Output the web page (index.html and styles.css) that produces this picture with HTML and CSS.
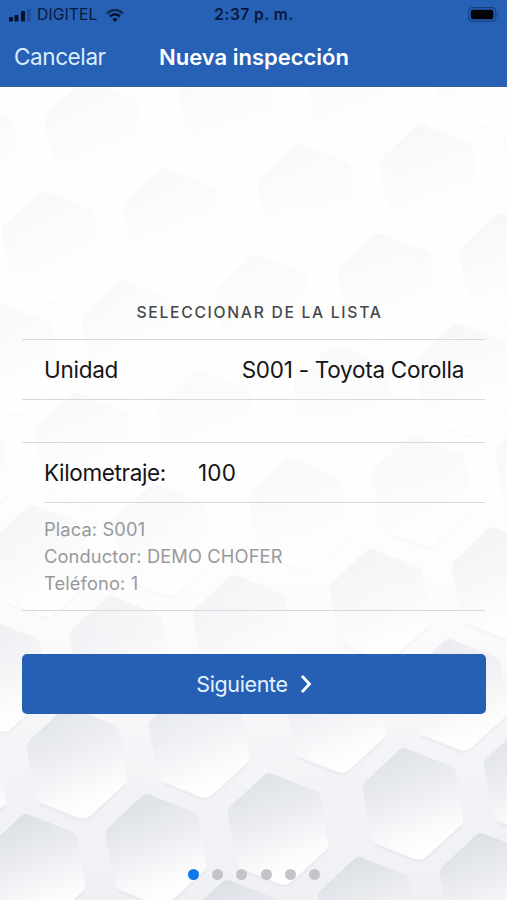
FILE: index.html
```
<!DOCTYPE html>
<html lang="es">
<head>
<meta charset="utf-8">
<title>Nueva inspección</title>
<link rel="stylesheet" href="styles.css">
</head>
<body>
<div class="screen">
  <svg class="backdrop" viewBox="0 0 507 900" aria-hidden="true">
    <defs>
      <linearGradient id="face" x1=".3" y1="0" x2=".65" y2="1">
        <stop offset="0" stop-color="#dbdee4"/>
        <stop offset=".4" stop-color="#eaecf0"/>
        <stop offset=".8" stop-color="#fcfcfd"/>
        <stop offset="1" stop-color="#fff"/>
      </linearGradient>
      <linearGradient id="ground" x1="0" y1="0" x2="0" y2="1">
        <stop offset=".3" stop-color="#fcfcfd"/>
        <stop offset=".65" stop-color="#f8f9fa"/>
        <stop offset=".85" stop-color="#f2f3f6"/>
        <stop offset="1" stop-color="#f0f1f5"/>
      </linearGradient>
      <linearGradient id="fade" x1="0" y1="0" x2="0" y2="1">
        <stop offset="0" stop-color="#fff" stop-opacity=".78"/>
        <stop offset=".5" stop-color="#fff" stop-opacity=".76"/>
        <stop offset=".66" stop-color="#fff" stop-opacity=".6"/>
        <stop offset=".78" stop-color="#fff" stop-opacity=".2"/>
        <stop offset=".9" stop-color="#fff" stop-opacity="0"/>
      </linearGradient>
      <radialGradient id="glow" cx=".42" cy=".4" r=".55">
        <stop offset="0" stop-color="#fff" stop-opacity=".4"/>
        <stop offset="1" stop-color="#fff" stop-opacity="0"/>
      </radialGradient>
      <filter id="soft" x="-10%" y="-10%" width="120%" height="120%"><feGaussianBlur stdDeviation=".8"/></filter>
      <g id="hex">
        <path d="M58 77 L23 109 Q17 114 10 112 L-28 97" fill="none" stroke="#dfe2e7" stroke-width="1.6" stroke-linejoin="round" filter="url(#soft)"/>
        <path d="M-5 2 Q0 -2 6 2 L47 18 Q51 20 52 25 L59 70 Q60 75 56 78 L22 109 Q17 113 11 111 L-27 96 Q-31 94 -32 90 L-41 42 Q-42 37 -38 33 Z" fill="url(#face)"/>
      </g>
    </defs>
    <rect width="507" height="900" fill="url(#ground)"/>
    <g transform="translate(-1 0)">
    <use href="#hex" x="-36" y="101"/><use href="#hex" x="87" y="80"/><use href="#hex" x="221" y="56"/><use href="#hex" x="348" y="35"/><use href="#hex" x="470" y="14"/>
    <use href="#hex" x="44" y="191"/><use href="#hex" x="166" y="168"/><use href="#hex" x="300" y="144"/><use href="#hex" x="422" y="124"/><use href="#hex" x="546" y="100"/>
    <use href="#hex" x="1" y="303"/><use href="#hex" x="123" y="280"/><use href="#hex" x="257" y="254"/><use href="#hex" x="380" y="233"/><use href="#hex" x="502" y="213"/>
    <use href="#hex" x="-48" y="417"/><use href="#hex" x="77" y="393"/><use href="#hex" x="200" y="370"/><use href="#hex" x="336" y="345"/><use href="#hex" x="458" y="323"/>
    <use href="#hex" x="33" y="505"/><use href="#hex" x="156" y="484"/><use href="#hex" x="291" y="458"/><use href="#hex" x="414" y="435"/><use href="#hex" x="537" y="413"/>
    <use href="#hex" x="-10" y="620"/><use href="#hex" x="112" y="596"/><use href="#hex" x="235" y="575"/><use href="#hex" x="372" y="549"/><use href="#hex" x="494" y="527"/>
    <use href="#hex" x="-52" y="728"/><use href="#hex" x="69" y="707"/><use href="#hex" x="191" y="686"/><use href="#hex" x="328" y="661"/><use href="#hex" x="450" y="639"/>
    <use href="#hex" x="27" y="814"/><use href="#hex" x="148" y="794"/><use href="#hex" x="270" y="773"/><use href="#hex" x="405" y="748"/><use href="#hex" x="526" y="725"/>
    <use href="#hex" x="228" y="880"/><use href="#hex" x="360" y="857"/><use href="#hex" x="482" y="833"/>
    </g>
    <rect width="507" height="900" fill="url(#fade)"/>
    <rect width="507" height="900" fill="url(#glow)"/>
  </svg>

  <header class="top">
    <div class="status">
      <div class="carrier">
        <svg class="signal" viewBox="0 0 22 13"><rect x="0" y="8" width="4" height="4.5" rx="1"/><rect x="5.5" y="6" width="4" height="6.5" rx="1"/><rect x="12" y="2" width="4" height="10.5" rx="1"/><rect x="18" y="0" width="4" height="13" rx="1" opacity=".2"/></svg>
        <span class="network">DIGITEL</span>
        <svg class="wifi" viewBox="0 0 18 13"><path d="M1 4.5 Q9 -2.5 17 4.5" opacity=".7"/><path d="M4 7.5 Q9 3 14 7.5"/><path class="dot" d="M6.2 10 Q9 7.8 11.8 10 L9 13Z"/></svg>
      </div>
      <span class="clock">2:37 p. m.</span>
      <svg class="battery" viewBox="0 0 33 16"><rect class="case" x=".6" y=".6" width="29" height="14.6" rx="4"/><rect x="3" y="3" width="24" height="10" rx="2"/><path d="M31 5.5 Q33.5 8 31 10.5Z" opacity=".35"/></svg>
    </div>
    <nav class="bar">
      <span class="cancel">Cancelar</span>
      <h1 class="title">Nueva inspección</h1>
    </nav>
  </header>

  <main class="content">
    <h2 class="caption">SELECCIONAR DE LA LISTA</h2>
    <section class="row">
      <span class="unit">Unidad</span>
      <span class="value">S001 - Toyota Corolla</span>
    </section>
    <section class="details">
      <div class="mileage"><span class="label">Kilometraje:</span><span class="km">100</span></div>
      <div class="info">
        <p class="plate">Placa: S001</p>
        <p class="driver">Conductor: DEMO CHOFER</p>
        <p class="phone">Teléfono: 1</p>
      </div>
    </section>
    <button class="next"><span>Siguiente</span><svg class="chevron" viewBox="0 0 12 20"><path d="M2 2 L9.5 10 L2 18"/></svg></button>
  </main>

  <footer class="pager"><i class="on"></i><i></i><i></i><i></i><i></i><i></i></footer>
</div>
</body>
</html>
```

FILE: styles.css
```
* { box-sizing: border-box; margin: 0; padding: 0; }
body { font-family: Inter, "Liberation Sans", sans-serif; color: #151517; }
.screen { position: relative; isolation: isolate; width: 507px; height: 900px; overflow: hidden; display: flex; flex-direction: column; }
.backdrop { position: absolute; inset: 0; z-index: -1; width: 507px; height: 900px; }

.top { height: 87px; background: #2661b5; border-bottom: 1px solid #3b5f98; }
.status { height: 29px; display: grid; grid-template-columns: 1fr auto 1fr; align-items: center; padding: 0 8px 0 9px; color: #07183d; }
.carrier { display: flex; align-items: center; }
.signal { width: 22px; height: 13px; margin-top: 2px; fill: #07112b; }
.network { margin-left: 6px; font-size: 15.7px; line-height: 29px; letter-spacing: .1px; }
.wifi { width: 18px; height: 13px; margin: 2px 0 0 8px; fill: none; stroke: #07112b; stroke-width: 2.5; }
.wifi .dot { fill: #07112b; stroke: none; }
.clock { font-size: 15.5px; font-weight: 600; line-height: 29px; letter-spacing: .5px; }
.battery { width: 31px; height: 15px; margin-top: -1px; justify-self: end; fill: #02040a; }
.battery .case { fill: none; stroke: #173f7e; stroke-width: 1.2; }
.bar { height: 56px; display: flex; align-items: center; padding-left: 14px; color: #fff; }
.cancel { width: 145px; padding-bottom: 1px; font-size: 22.5px; letter-spacing: -.4px; color: #dcecff; }
.title { font-size: 22px; font-weight: 600; white-space: nowrap; }

.content { padding: 215px 22px 0; }
.caption { height: 37px; padding-left: 12px; text-align: center; font-size: 15.7px; line-height: 22px; font-weight: 500; letter-spacing: 1.7px; color: #48484b; white-space: nowrap; }
.row { height: 61px; display: flex; justify-content: space-between; align-items: center; padding: 0 21px 0 22px; border: solid #d9dadd; border-width: 1px 0; font-size: 22.5px; letter-spacing: -.27px; white-space: nowrap; }
.details { margin-top: 42px; height: 169px; padding-left: 22px; border: solid #d9dadd; border-width: 1px 0; }
.mileage { height: 60px; display: flex; align-items: center; padding-bottom: 1px; border-bottom: 1px solid #d9dadd; font-size: 22.5px; letter-spacing: -.35px; }
.label { width: 154px; }
.km { letter-spacing: .2px; }
.info { padding-top: 13px; font-size: 18.3px; line-height: 27px; color: #98999c; letter-spacing: .12px; }
.info p { width: max-content; }
.next { width: 464px; height: 60px; margin-top: 43px; display: flex; align-items: center; justify-content: center; gap: 12px; border: 0; border-radius: 5px; background: #2560b4; color: #e5f1ff; font: 21.5px Inter, "Liberation Sans", sans-serif; letter-spacing: -.35px; }
.chevron { width: 12px; height: 20px; margin-top: -1px; fill: none; stroke: #fff; stroke-width: 2.8; }
.pager { margin-top: auto; padding: 0 0 20px 1px; display: flex; justify-content: center; gap: 13.3px; }
.pager i { width: 11px; height: 11px; border-radius: 50%; background: #c3c5c8; }
.pager .on { background: #0f78e8; }
```
